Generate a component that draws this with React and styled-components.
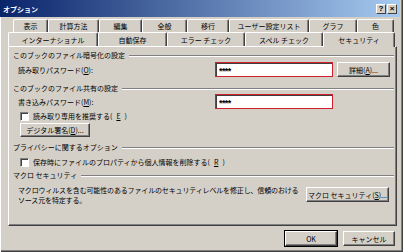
import React from "react";
import styled, { createGlobalStyle } from "styled-components";

const GlobalStyle = createGlobalStyle`
  html, body {
    margin: 0;
    padding: 0;
    background: #d4d0c8;
  }
  body {
    font-family: "Noto Sans CJK JP", "Noto Sans", sans-serif;
    font-size: 7px;
    color: #000;
  }
`;

const Window = styled.div`
  width: 403px;
  height: 252px;
  box-sizing: border-box;
  background: #d4d0c8;
  padding: 0 3px 3px 2px;
  box-shadow: inset 1px 0 #ffffff, inset -1px -1px #404040, inset -2px -2px #808080;
  display: flex;
  flex-direction: column;
  overflow: hidden;
`;

const TitleBar = styled.div`
  height: 17px;
  margin-left: -2px;
  display: flex;
  align-items: center;
  padding: 0 3px 0 3px;
  background: linear-gradient(to right, #0a246a, #a6caf0);
`;

const Title = styled.span`
  color: #fff;
  font-weight: bold;
  font-size: 7px;
`;

const TitleButtons = styled.div`
  margin-left: auto;
  display: flex;
  gap: 1px;
`;

const TitleButton = styled.div`
  width: 10px;
  height: 10px;
  box-sizing: border-box;
  background: #d4d0c8;
  border-top: 1px solid #fff;
  border-left: 1px solid #fff;
  border-right: 1px solid #404040;
  border-bottom: 1px solid #404040;
  display: flex;
  align-items: center;
  justify-content: center;
  font-family: "Liberation Sans", sans-serif;
  font-weight: bold;
  font-size: 8px;
  line-height: 1;
`;

const Body = styled.div`
  padding: 2px 3px 0 6px;
  display: flex;
  flex-direction: column;
`;

const TabRow = styled.div`
  display: flex;
  height: ${(p) => p.$h}px;
  padding-left: ${(p) => p.$indent || 0}px;
`;

const Tab = styled.div`
  width: ${(p) => p.$w}px;
  box-sizing: border-box;
  border-top: 1px solid #fff;
  border-left: 1px solid #fff;
  border-right: 1px solid #404040;
  box-shadow: inset -1px 0 #808080;
  border-radius: 2px 2px 0 0;
  display: flex;
  align-items: center;
  justify-content: center;
  white-space: nowrap;
  background: #d4d0c8;
  position: relative;
  z-index: ${(p) => (p.$active ? 1 : 0)};
  margin-bottom: ${(p) => (p.$active ? -1 : 0)}px;
`;

const Panel = styled.div`
  height: 180px;
  box-sizing: border-box;
  border-top: 1px solid #fff;
  border-left: 1px solid #fff;
  border-right: 1px solid #404040;
  border-bottom: 1px solid #404040;
  box-shadow: inset -1px -1px #808080;
  padding: 3px 2px 0 0;
  display: flex;
  flex-direction: column;
`;

const GroupHeader = styled.div`
  display: flex;
  align-items: center;
  height: 10px;
  padding-left: 4px;
  margin-top: ${(p) => p.$mt || 0}px;
  white-space: nowrap;
`;

const Rule = styled.div`
  flex: 1;
  height: 0;
  margin: 2px 0 0 4px;
  border-top: 1px solid #808080;
  border-bottom: 1px solid #fff;
`;

const FieldRow = styled.div`
  display: flex;
  align-items: center;
  height: 15px;
  padding-left: 9px;
  margin-top: ${(p) => p.$mt || 0}px;
`;

const FieldLabel = styled.div`
  width: 197px;
  white-space: nowrap;
`;

const PasswordBox = styled.div`
  width: 118px;
  height: 15px;
  box-sizing: border-box;
  border: 1px solid #d0202c;
  box-shadow: inset 1px 1px #404040;
  background: #fff;
  padding: 2px 0 0 3px;
  display: flex;
  align-items: center;
  font-family: "Liberation Sans", sans-serif;
  font-weight: bold;
  font-size: 9px;
  letter-spacing: -0.6px;
`;

const Button = styled.div`
  width: ${(p) => p.$w}px;
  height: ${(p) => p.$h || 15}px;
  box-sizing: border-box;
  margin-left: ${(p) => p.$ml || 0}px;
  margin-top: ${(p) => p.$mt || 0}px;
  flex-shrink: 0;
  align-self: flex-start;
  background: #d4d0c8;
  border-top: 1px solid #fff;
  border-left: 1px solid #fff;
  border-right: 1px solid #404040;
  border-bottom: 1px solid #404040;
  box-shadow: ${(p) =>
    p.$default
      ? "0 0 0 1px #000, inset -1px -1px #808080"
      : "inset -1px -1px #808080"};
  display: flex;
  align-items: center;
  justify-content: center;
  white-space: nowrap;
`;

const CheckRow = styled.div`
  display: flex;
  align-items: center;
  gap: 4px;
  height: 10px;
  padding-left: 11px;
  margin-top: ${(p) => p.$mt || 0}px;
  white-space: nowrap;
`;

const CheckBox = styled.div`
  width: 9px;
  height: 9px;
  box-sizing: border-box;
  background: #fff;
  border-top: 1px solid #808080;
  border-left: 1px solid #808080;
  border-right: 1px solid #fff;
  border-bottom: 1px solid #fff;
  box-shadow: inset 1px 1px #404040;
`;

const MacroRow = styled.div`
  display: flex;
  padding-left: 9px;
  margin-top: 5px;
`;

const Description = styled.div`
  width: 286px;
  line-height: 10px;
  white-space: nowrap;
  letter-spacing: -0.15px;
`;

const Footer = styled.div`
  display: flex;
  justify-content: flex-end;
  gap: 6px;
  margin-top: 5px;
  padding-right: 2px;
`;

const rowOne = [
  ["表示", 35],
  ["計算方法", 51],
  ["編集", 43],
  ["全般", 45],
  ["移行", 42],
  ["ユーザー設定リスト", 80],
  ["グラフ", 48],
  ["色", 37],
];

const rowTwo = [
  ["インターナショナル", 90],
  ["自動保存", 69],
  ["エラー チェック", 78],
  ["スペル チェック", 78],
  ["セキュリティ", 72, true],
];

export default function App() {
  return (
    <>
      <GlobalStyle />
      <Window>
        <TitleBar>
          <Title>オプション</Title>
          <TitleButtons>
            <TitleButton>?</TitleButton>
            <TitleButton>×</TitleButton>
          </TitleButtons>
        </TitleBar>
        <Body>
          <TabRow $h={13} $indent={5}>
            {rowOne.map(([label, w]) => (
              <Tab key={label} $w={w}>
                {label}
              </Tab>
            ))}
          </TabRow>
          <TabRow $h={14}>
            {rowTwo.map(([label, w, active]) => (
              <Tab key={label} $w={w} $active={active}>
                {label}
              </Tab>
            ))}
          </TabRow>
          <Panel>
            <GroupHeader>
              このブックのファイル暗号化の設定
              <Rule />
            </GroupHeader>
            <FieldRow $mt={2}>
              <FieldLabel>
                読み取りパスワード(<u>O</u>):
              </FieldLabel>
              <PasswordBox>****</PasswordBox>
              <Button $w={53} $ml={4}>
                詳細(<u>A</u>)...
              </Button>
            </FieldRow>
            <GroupHeader $mt={6}>
              このブックのファイル共有の設定
              <Rule />
            </GroupHeader>
            <FieldRow $mt={1}>
              <FieldLabel>
                書き込みパスワード(<u>M</u>):
              </FieldLabel>
              <PasswordBox>****</PasswordBox>
            </FieldRow>
            <CheckRow $mt={2}>
              <CheckBox />
              読み取り専用を推奨する(<u>E</u>)
            </CheckRow>
            <Button $w={70} $h={14} $ml={11} $mt={2}>
              デジタル署名(<u>D</u>)...
            </Button>
            <GroupHeader $mt={5}>
              プライバシーに関するオプション
              <Rule />
            </GroupHeader>
            <CheckRow $mt={5}>
              <CheckBox />
              保存時にファイルのプロパティから個人情報を削除する(<u>R</u>)
            </CheckRow>
            <GroupHeader $mt={3}>
              マクロ セキュリティ
              <Rule />
            </GroupHeader>
            <MacroRow>
              <Description>
                マクロウィルスを含む可能性のあるファイルのセキュリティレベルを修正し、信頼のおける
                <br />
                ソース元を特定する。
              </Description>
              <Button $w={83} $ml={2} $mt={2}>
                マクロ セキュリティ(<u>S</u>)...
              </Button>
            </MacroRow>
          </Panel>
          <Footer>
            <Button $w={52} $default>
              OK
            </Button>
            <Button $w={52}>キャンセル</Button>
          </Footer>
        </Body>
      </Window>
    </>
  );
}
